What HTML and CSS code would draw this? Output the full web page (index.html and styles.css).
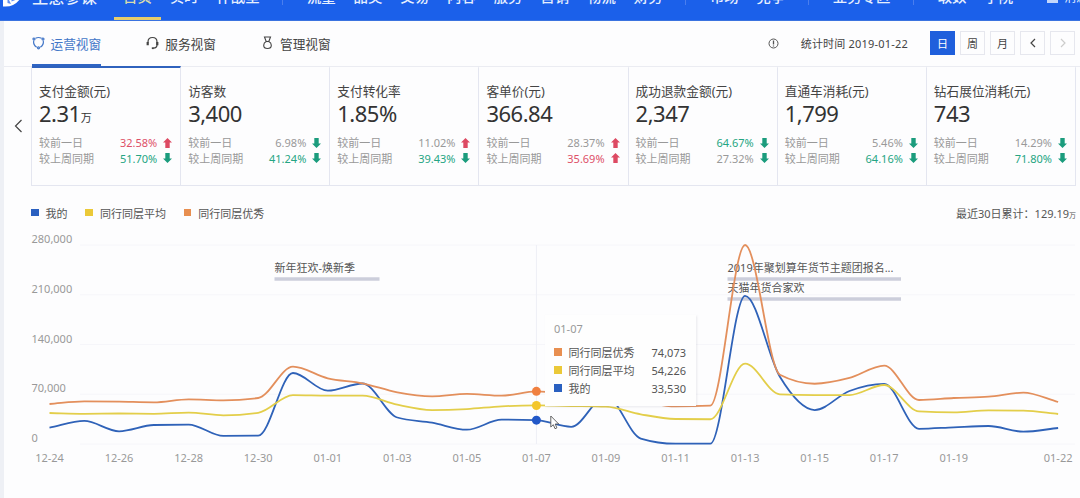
FILE: index.html
```html
<!DOCTYPE html>
<html lang="zh-CN">
<head>
    <meta charset="UTF-8">
    <meta name="viewport" content="width=device-width, initial-scale=1.0">
    <title>生意参谋</title>
    <link rel="stylesheet" href="styles.css">
</head>
<body>
    <!-- 顶部导航 -->
    <div class="nav">
        <svg class="logo" width="22" height="20" viewBox="0 0 22 20">
            <path d="M0 0H20.500Q20 13 10 18Q6 20 0 19.500Z" fill="#fff"/>
            <path d="M4.500 16V10L8 17Z" fill="#5f8ff2"/>
            <path d="M8.500 13.500V9H16Q15 12.500 8.500 14.500Z" fill="#5f8ff2"/>
        </svg>
        <span class="brand">生意参谋</span>
        <div class="menu">
            <span class="on">首页</span><span>实时</span><span>作战室</span>
            <i class="sep"></i>
            <span>流量</span><span>品类</span><span>交易</span><span>内容</span><span>服务</span><span>营销</span><span>物流</span><span>财务</span>
            <i class="sep"></i>
            <span>市场</span><span>竞争</span>
            <i class="sep"></i>
            <span>业务专区</span>
            <i class="sep"></i>
            <span>取数</span><span>学院</span>
        </div>
        <div class="msg"><i class="mail"></i>消息</div>
    </div>

    <div class="page">
        <!-- 视窗切换 -->
        <div class="bar">
            <div class="tab active">
                <svg width="13" height="14" viewBox="0 0 13 14" fill="none" stroke="currentColor" stroke-width="1.200">
                    <path d="M3.500 2.200Q6.500 .800 9.500 2.200M11.300 4.500Q12 9 8.300 11.300M4.700 11.300Q1 9 1.700 4.500"/>
                    <circle cx="2" cy="3" r="1"/><circle cx="11" cy="3" r="1"/><circle cx="6.500" cy="11.800" r="1"/>
                </svg>
                <span>运营视窗</span>
            </div>
            <div class="tab">
                <svg width="13" height="14" viewBox="0 0 13 14" fill="none" stroke="currentColor" stroke-width="1.200">
                    <path d="M2 6.500V6Q2 1.500 6.500 1.500T11 6V9Q11 12 7.300 12.200"/>
                    <path d="M1.700 6V9.300M11.300 6V9.300" stroke-width="2.200"/>
                    <path d="M5.800 12.200H7.800" stroke-width="1.800"/>
                </svg>
                <span>服务视窗</span>
            </div>
            <div class="tab">
                <svg width="13" height="14" viewBox="0 0 13 14" fill="none" stroke="currentColor" stroke-width="1.100">
                    <path d="M3.500 1H9.500L7.800 5.500Q10.300 6.700 10.300 9.200Q10.300 12.500 6.500 12.500T2.700 9.200Q2.700 6.700 5.200 5.500Z"/>
                    <path d="M5 5.500H8"/>
                </svg>
                <span>管理视窗</span>
            </div>
            <div class="filter">
                <svg class="tip" width="11" height="11" viewBox="0 0 11 11" fill="none" stroke="#555">
                    <circle cx="5.500" cy="5.500" r="4.500"/>
                    <path d="M5.500 2.500V6.500M5.500 7.500V8.500" stroke-width="1.300"/>
                </svg>
                <span class="date">统计时间 2019-01-22</span>
                <div class="btns">
                    <span class="btn cur">日</span>
                    <span class="btn">周</span>
                    <span class="btn">月</span>
                    <span class="btn"><svg width="8" height="10" viewBox="0 0 8 10"><path d="M6 1L2 5L6 9"/></svg></span>
                    <span class="btn off"><svg width="8" height="10" viewBox="0 0 8 10"><path d="M2 1L6 5L2 9"/></svg></span>
                </div>
            </div>
        </div>

        <!-- 指标卡片 -->
        <div class="cards">
            <div class="prev"><svg width="9" height="14" viewBox="0 0 9 14"><path d="M7.500 1L1.500 7L7.500 13"/></svg></div>
            <div class="list" id="cards"></div>
        </div>

        <div class="legend">
            <span class="key blue">我的</span>
            <span class="key yellow">同行同层平均</span>
            <span class="key orange">同行同层优秀</span>
            <span class="total">最近30日累计：129.19<small>万</small></span>
        </div>

        <!-- 趋势图 -->
        <div class="chart">
            <svg id="trend" width="1080" height="273" viewBox="0 225 1080 273"></svg>
            <div class="tooltip">
                <div class="day">01-07</div>
                <div class="row"><span class="key orange">同行同层优秀</span><b>74,073</b></div>
                <div class="row"><span class="key yellow">同行同层平均</span><b>54,226</b></div>
                <div class="row"><span class="key blue">我的</span><b>33,530</b></div>
            </div>
            <svg class="cursor" width="10" height="15" viewBox="0 0 10 15">
                <path d="M.800 1V12L3.300 9.700L5 13.700L6.900 12.900L5.200 9H8.700Z" fill="#fff" stroke="#555" stroke-width=".9"/>
            </svg>
        </div>
    </div>

    <script src="main.js"></script>
</body>
</html>
```
FILE: styles.css
```css
*{
    box-sizing: border-box;
}
body{
    margin: 0;
    width: 1080px;
    height: 498px;
    overflow: hidden;
    background-color: #fdfdfe;
    font-family: "Noto Sans", "Noto Sans CJK SC", sans-serif;
    font-size: 11px;
    color: #555;
}
svg{
    display: block;
    flex: none;
}

/* 导航 */
.nav{
    display: flex;
    height: 21px;
    overflow: hidden;
    background-color: #1b60ea;
    border-bottom: 1px solid #3b73e0;
    color: #e6effe;
    white-space: nowrap;
}
.logo{
    margin: -13px 0 0 3px;
}
.brand{
    flex: none;
    width: 89px;
    margin: -13px 0 0 7px;
    font-size: 16.3px;
    line-height: 20px;
    font-weight: 500;
}
.menu{
    display: flex;
    flex: none;
    gap: 17.9px;
    padding-left: 2px;
    font-size: 14.4px;
    line-height: 20px;
    font-weight: 500;
}
.menu span{
    margin-top: -13px;
}
.menu .on{
    height: 33px;
    margin-left: -9px;
    margin-right: -9px;
    padding: 0 9px;
    border-bottom: 3px solid #e6cd6c;
    color: #d8dcae;
}
.sep{
    width: 1px;
    height: 5px;
    margin: 0 5.9px 0 4.7px;
    background-color: #4a7eee;
}
.msg{
    display: flex;
    flex: none;
    gap: 6px;
    margin: -12px 0 0 34px;
    font-size: 12px;
    line-height: 20px;
}
.mail{
    width: 11px;
    height: 9px;
    margin-top: 6px;
    background-color: #c3d6fb;
}

.page{
    border-left: 4px solid #eef0f5;
    height: 477px;
}

/* 标签栏 */
.bar{
    display: flex;
    gap: 45px;
    height: 46px;
    padding: 0 5px 0 27.500px;
    border-bottom: 1px solid #ebecf2;
    font-size: 12.7px;
    color: #444;
}
.tab{
    display: flex;
    align-items: center;
    gap: 6px;
    height: 44px;
    white-space: nowrap;
}
.tab.active{
    height: 45px;
    color: #4377c8;
    border-bottom: 2px solid #2f65c4;
    padding-top: 1px;
}
.filter{
    display: flex;
    align-items: center;
    height: 44px;
    margin-left: auto;
    font-size: 11px;
}
.date{
    margin: 0 22px 0 22px;
    letter-spacing: .2px;
}
.btns{
    display: flex;
    gap: 5px;
}
.btn{
    display: flex;
    align-items: center;
    justify-content: center;
    width: 25px;
    height: 24px;
    border: 1px solid #e6e7ee;
    color: #444;
}
.btn.cur{
    background-color: #1f5fdc;
    border-color: #1f5fdc;
    color: #fff;
}
.btn path, .prev path{
    fill: none;
    stroke: #444;
    stroke-width: 1.2;
}
.btn.off path{
    stroke: #ccc;
}

/* 卡片 */
.cards{
    display: flex;
    height: 119px;
}
.prev{
    display: flex;
    align-items: center;
    width: 27px;
    padding: 0 0 2px 10px;
}
.list{
    display: grid;
    grid-template-columns: repeat(7, 1fr);
    width: 1045px;
    border-left: 1px solid #e4e6f0;
    border-bottom: 1px solid #e4e6f0;
    margin-top: -1px;
}
.card{
    padding: 14px 8px 0 7px;
    border-right: 1px solid #e4e6f0;
    border-top: 2px solid transparent;
}
.card.active{
    border-top-color: #2f62bd;
}
.name{
    font-size: 12.7px;
    line-height: 18px;
    color: #444;
}
.num{
    height: 26px;
    font-size: 22px;
    line-height: 26px;
    letter-spacing: -.5px;
    color: #333;
}
.num small{
    font-size: 11px;
    letter-spacing: 0;
}
.cmp{
    display: flex;
    align-items: center;
    height: 15.500px;
    line-height: 15px;
    color: #999;
}
.num + .cmp{
    margin-top: 9px;
}
.cmp b{
    margin-left: auto;
    margin-right: 6px;
    font-weight: normal;
}
.cmp .up{
    color: #dd5068;
}
.cmp .down{
    color: #25a583;
}

/* 图例 */
.legend{
    display: flex;
    align-items: center;
    gap: 17.900px;
    height: 39px;
    padding: 14px 4px 0 27px;
}
.key{
    display: flex;
    align-items: center;
    gap: 7px;
    white-space: nowrap;
}
.key::before{
    content: "";
    width: 7.500px;
    height: 7.500px;
}
.blue::before{
    background-color: #2a60c0;
}
.yellow::before{
    background-color: #ebc938;
}
.orange::before{
    background-color: #e88f50;
}
.total{
    margin-left: auto;
}
.total small{
    font-size: 7px;
}

/* 图表 */
.chart{
    position: relative;
    margin-left: -4px;
}
.axis{
    fill: #999;
}
.event{
    fill: #555;
}
.tooltip{
    position: absolute;
    left: 545px;
    top: 90px;
    width: 151px;
    height: 91px;
    padding: 5px 10px 0 9px;
    background-color: #fefefe;
    box-shadow: 1px 1px 2px rgba(120, 120, 140, .15);
}
.tooltip .day{
    height: 23px;
    line-height: 18px;
    color: #999;
}
.tooltip .row{
    display: flex;
    justify-content: space-between;
    align-items: center;
    height: 18px;
}
.tooltip b{
    font-weight: normal;
}
.cursor{
    position: absolute;
    left: 550px;
    top: 190px;
}
```
FILE: main.js
```js
const cards = [
    ['支付金额(元)', '2.31<small>万</small>', '32.58%', 'up', 'up', '51.70%', 'down', 'down'],
    ['访客数', '3,400', '6.98%', '', 'down', '41.24%', 'down', 'down'],
    ['支付转化率', '1.85%', '11.02%', '', 'up', '39.43%', 'down', 'down'],
    ['客单价(元)', '366.84', '28.37%', '', 'up', '35.69%', 'up', 'up'],
    ['成功退款金额(元)', '2,347', '64.67%', 'down', 'down', '27.32%', '', 'down'],
    ['直通车消耗(元)', '1,799', '5.46%', '', 'down', '64.16%', 'down', 'down'],
    ['钻石展位消耗(元)', '743', '14.29%', '', 'down', '71.80%', 'down', 'down']
];

// 上下箭头
function arrow(dir) {
    const d = dir === 'up' ? 'M4.5 0L9 4.500H6.700V10H2.300V4.500H0Z' : 'M4.5 10L9 5.500H6.700V0H2.300V5.500H0Z';
    return `<svg width="9" height="10" viewBox="0 0 9 10"><path d="${d}" fill="${dir === 'up' ? '#dd4a63' : '#1b9c7d'}"/></svg>`;
}

document.querySelector('#cards').innerHTML = cards.map((c, i) => `
    <div class="card ${i === 0 ? 'active' : ''}">
        <div class="name">${c[0]}</div>
        <div class="num">${c[1]}</div>
        <div class="cmp">较前一日<b class="${c[3]}">${c[2]}</b>${arrow(c[4])}</div>
        <div class="cmp">较上周同期<b class="${c[6]}">${c[5]}</b>${arrow(c[7])}</div>
    </div>`).join('');

// 单位：千
const mine = [23.2, 32.4, 17.9, 26.7, 27.4, 11.3, 11.7, 99.9, 75, 85.1, 37.3, 30, 20.1, 34.2, 33.53, 24.2, 67.5, 7.7, .4, .4, 208.5, 94.5, 47.8, 74.6, 84.7, 21.4, 23.5, 25.3, 17.3, 22.5];
const avg = [43.6, 42.5, 42.9, 42.5, 44.2, 40.4, 43.9, 68.9, 68.1, 68, 55.3, 47.8, 49.2, 53, 54.226, 53.5, 52.5, 41.8, 35.2, 34.8, 113, 69.9, 68.9, 68.9, 83, 45.9, 44.6, 47.4, 46.9, 42.2];
const good = [56.3, 59.9, 59.5, 58.7, 62.9, 61.5, 64.7, 108.8, 92.4, 85.4, 72.7, 67.1, 70.4, 68, 74.073, 70, 66, 60, 52.9, 54, 280, 97.5, 84.8, 92.9, 110.2, 61.9, 64.7, 66.6, 72.2, 59.1];

const step = 34.78;
const X = i => 49.5 + i * step;
const Y = v => 444 - v * 199 / 280;

// 单调三次曲线
function curve(data) {
    const y = data.map(Y);
    const n = y.length;
    const s = [];
    for (let i = 0; i < n - 1; i++) s.push((y[i + 1] - y[i]) / step);
    const m = y.map((_, i) => {
        if (i === 0) return s[0];
        if (i === n - 1) return s[n - 2];
        const a = s[i - 1], b = s[i];
        return a * b <= 0 ? 0 : Math.sign(a) * Math.min(Math.abs(a), Math.abs(b), Math.abs(a + b) / 4) * 2;
    });
    let d = `M${X(0)} ${y[0]}`;
    for (let i = 1; i < n; i++) {
        const k = step / 3;
        d += `C${X(i - 1) + k} ${y[i - 1] + m[i - 1] * k} ${X(i) - k} ${y[i] - m[i] * k} ${X(i)} ${y[i]}`;
    }
    return d;
}

let str = '';
[280, 210, 140, 70, 0].forEach(v => {
    const label = v ? v + ',000' : '0';
    str += `<path d="M80 ${Y(v)}H1075" stroke="#f6f6fa"/><text class="axis" x="31.5" y="${Y(v) - 2}">${label}</text>`;
});

const days = { 0: '12-24', 2: '12-26', 4: '12-28', 6: '12-30', 8: '01-01', 10: '01-03', 12: '01-05', 14: '01-07', 16: '01-09', 18: '01-11', 20: '01-13', 22: '01-15', 24: '01-17', 26: '01-19', 29: '01-22' };
for (const i in days) {
    str += `<text class="axis" x="${X(+i)}" y="462" text-anchor="middle">${days[i]}</text>`;
}

// 活动标记
[[274.5, 379.5, 272, '新年狂欢-焕新季'], [727.5, 901, 272, '2019年聚划算年货节主题团报名...'], [727.5, 901, 292, '天猫年货合家欢']].forEach(e => {
    str += `<path d="M${e[0]} ${e[2] + 7}H${e[1]}" stroke="#cccedb" stroke-width="3.5"/><text class="event" x="${e[0]}" y="${e[2]}">${e[3]}</text>`;
});

str += `<path d="M${X(14)} 245V444" stroke="#eeeff6"/>`;
[[mine, '#2f62b8', '#2258c8'], [avg, '#e3ce4a', '#f3c62c'], [good, '#e38f5c', '#f08040']].forEach(l => {
    str += `<path d="${curve(l[0])}" fill="none" stroke="${l[1]}" stroke-width="1.8"/>`;
    str += `<circle cx="${X(14)}" cy="${Y(l[0][14])}" r="4.5" fill="${l[2]}"/>`;
});
document.querySelector('#trend').innerHTML = str;
```
